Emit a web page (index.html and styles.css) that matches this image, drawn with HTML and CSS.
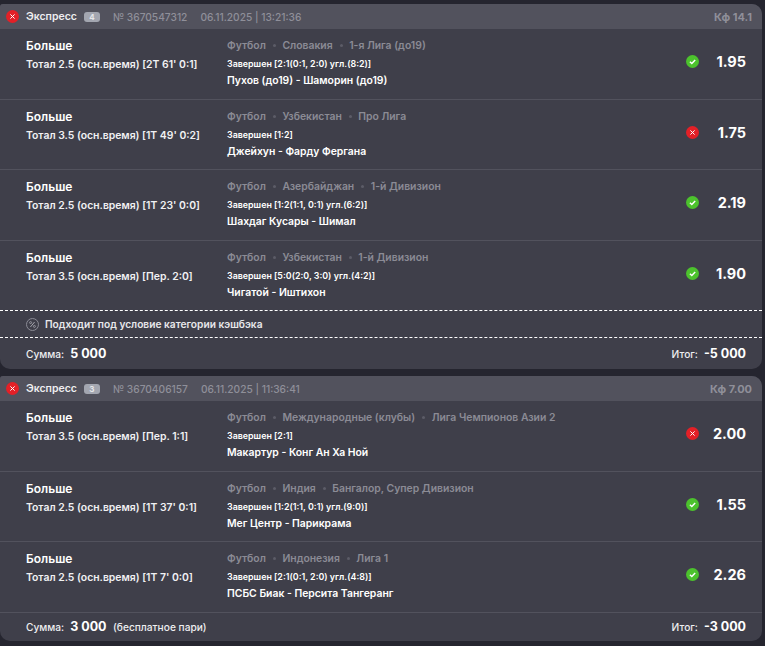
FILE: index.html
```html
<!DOCTYPE html>
<html lang="en">
<head>
  <meta charset="UTF-8" />
  <meta name="viewport" content="width=device-width, initial-scale=1.0"/>
  <title>Bets</title>
  <link rel="stylesheet" href="styles.css">
</head>
<body>
  <svg class="defs" width="0" height="0">
    <symbol id="ico-lost" viewBox="0 0 13 13">
      <circle cx="6.5" cy="6.5" r="6.5" fill="#e32027"/>
      <path d="M4.4 4.4l4.2 4.2M8.6 4.4l-4.2 4.2" stroke="#fff" stroke-width="1" fill="none"/>
    </symbol>
    <symbol id="ico-won" viewBox="0 0 13 13">
      <circle cx="6.5" cy="6.5" r="6.5" fill="#4cc22d"/>
      <path d="M3.9 6.8l1.9 1.7 3.4-3.6" stroke="#fff" stroke-width="1.4" fill="none"/>
    </symbol>
  </svg>

  <section class="card">
    <div class="card-head">
      <svg class="ico"><use href="#ico-lost"/></svg>
      <span class="type">Экспресс</span>
      <span class="count">4</span>
      <span class="num">№ 3670547312</span>
      <span class="date">06.11.2025 | 13:21:36</span>
      <span class="coef">Кф 14.1</span>
    </div>

    <div class="row">
      <div class="market"><b>Больше</b><p>Тотал 2.5 (осн.время) [2Т 61' 0:1]</p></div>
      <div class="info">
        <div class="path"><span>Футбол</span><i></i><span>Словакия</span><i></i><span>1-я Лига (до19)</span></div>
        <div class="state">Завершен [2:1(0:1, 2:0) угл.(8:2)]</div>
        <div class="teams">Пухов (до19) - Шаморин (до19)</div>
      </div>
      <svg class="ico"><use href="#ico-won"/></svg>
      <div class="odd">1.95</div>
    </div>

    <div class="row">
      <div class="market"><b>Больше</b><p>Тотал 3.5 (осн.время) [1Т 49' 0:2]</p></div>
      <div class="info">
        <div class="path"><span>Футбол</span><i></i><span>Узбекистан</span><i></i><span>Про Лига</span></div>
        <div class="state">Завершен [1:2]</div>
        <div class="teams">Джейхун - Фарду Фергана</div>
      </div>
      <svg class="ico"><use href="#ico-lost"/></svg>
      <div class="odd">1.75</div>
    </div>

    <div class="row">
      <div class="market"><b>Больше</b><p>Тотал 2.5 (осн.время) [1Т 23' 0:0]</p></div>
      <div class="info">
        <div class="path"><span>Футбол</span><i></i><span>Азербайджан</span><i></i><span>1-й Дивизион</span></div>
        <div class="state">Завершен [1:2(1:1, 0:1) угл.(6:2)]</div>
        <div class="teams">Шахдаг Кусары - Шимал</div>
      </div>
      <svg class="ico"><use href="#ico-won"/></svg>
      <div class="odd">2.19</div>
    </div>

    <div class="row last">
      <div class="market"><b>Больше</b><p>Тотал 3.5 (осн.время) [Пер. 2:0]</p></div>
      <div class="info">
        <div class="path"><span>Футбол</span><i></i><span>Узбекистан</span><i></i><span>1-й Дивизион</span></div>
        <div class="state">Завершен [5:0(2:0, 3:0) угл.(4:2)]</div>
        <div class="teams">Чигатой - Иштихон</div>
      </div>
      <svg class="ico"><use href="#ico-won"/></svg>
      <div class="odd">1.90</div>
    </div>

    <div class="cashback">
      <svg class="pct" viewBox="0 0 13 13">
        <circle cx="6.5" cy="6.5" r="6" fill="none" stroke="#8b8b95"/>
        <path d="M4.4 9l4.2-5" stroke="#a5a5ad" fill="none"/>
        <circle cx="4.6" cy="4.6" r="1" fill="none" stroke="#a5a5ad" stroke-width=".8"/>
        <circle cx="8.4" cy="8.4" r="1" fill="none" stroke="#a5a5ad" stroke-width=".8"/>
      </svg>
      <span>Подходит под условие категории кэшбэка</span>
    </div>

    <div class="card-foot">
      <span class="label">Сумма:</span><span class="amount">5 000</span>
      <span class="label result">Итог:</span><span class="amount">-5 000</span>
    </div>
  </section>

  <section class="card">
    <div class="card-head">
      <svg class="ico"><use href="#ico-lost"/></svg>
      <span class="type">Экспресс</span>
      <span class="count">3</span>
      <span class="num">№ 3670406157</span>
      <span class="date">06.11.2025 | 11:36:41</span>
      <span class="coef">Кф 7.00</span>
    </div>

    <div class="row">
      <div class="market"><b>Больше</b><p>Тотал 3.5 (осн.время) [Пер. 1:1]</p></div>
      <div class="info">
        <div class="path"><span>Футбол</span><i></i><span>Международные (клубы)</span><i></i><span>Лига Чемпионов Азии 2</span></div>
        <div class="state">Завершен [2:1]</div>
        <div class="teams">Макартур - Конг Ан Ха Ной</div>
      </div>
      <svg class="ico"><use href="#ico-lost"/></svg>
      <div class="odd">2.00</div>
    </div>

    <div class="row">
      <div class="market"><b>Больше</b><p>Тотал 2.5 (осн.время) [1Т 37' 0:1]</p></div>
      <div class="info">
        <div class="path"><span>Футбол</span><i></i><span>Индия</span><i></i><span>Бангалор, Супер Дивизион</span></div>
        <div class="state">Завершен [1:2(1:1, 0:1) угл.(9:0)]</div>
        <div class="teams">Мег Центр - Парикрама</div>
      </div>
      <svg class="ico"><use href="#ico-won"/></svg>
      <div class="odd">1.55</div>
    </div>

    <div class="row">
      <div class="market"><b>Больше</b><p>Тотал 2.5 (осн.время) [1Т 7' 0:0]</p></div>
      <div class="info">
        <div class="path"><span>Футбол</span><i></i><span>Индонезия</span><i></i><span>Лига 1</span></div>
        <div class="state">Завершен [2:1(0:1, 2:0) угл.(4:8)]</div>
        <div class="teams">ПСБС Биак - Персита Тангеранг</div>
      </div>
      <svg class="ico"><use href="#ico-won"/></svg>
      <div class="odd">2.26</div>
    </div>

    <div class="card-foot short">
      <span class="label">Сумма:</span><span class="amount">3 000</span>
      <span class="label free">(бесплатное пари)</span>
      <span class="label result">Итог:</span><span class="amount">-3 000</span>
    </div>
  </section>
</body>
</html>
```

FILE: styles.css
```css
* { box-sizing: border-box; }

html, body {
  height: 100%;
  overflow: hidden;
}

body {
  margin: 0;
  padding-top: 4px;
  padding-right: 3px;
  font-family: Inter, "Liberation Sans", sans-serif;
  background-color: #25252f;
  color: #fff;
}

.defs {
  position: absolute;
}

.card {
  background: #3f3f4a;
  border-radius: 3px 10px 10px 10px;
  margin-bottom: 7px;
  overflow: hidden;
}

.card-head {
  display: flex;
  align-items: center;
  height: 25px;
  padding: 0 10px 0 6px;
  background-color: #52525d;
  font-size: 10.2px;
  font-weight: 500;
  color: #8f8f99;
}

.ico {
  width: 13px;
  height: 13px;
  flex-shrink: 0;
}

.type {
  margin-left: 7px;
  font-size: 10.5px;
  color: #eeeef0;
  font-weight: 600;
}

.count {
  margin-left: 7px;
  width: 16px;
  height: 10px;
  line-height: 10px;
  border-radius: 3px;
  text-align: center;
  font-size: 8px;
  font-weight: 700;
  background-color: #a3a6b0;
  color: #e6e7ea;
}

.num {
  margin-left: 13px;
}

.date {
  margin-left: 13px;
}

.coef {
  margin-left: auto;
  font-size: 11px;
  font-weight: 700;
}

.row {
  display: flex;
  align-items: center;
  height: 70.5px;
  padding: 0 16px 4px 26px;
  border-bottom: 1px solid #52525d;
}

.row.last {
  height: 69.5px;
  border-bottom: none;
}

.market {
  width: 201px;
  align-self: flex-start;
  padding-top: 8px;
}

.market b {
  display: block;
  font-size: 12px;
  font-weight: 600;
  line-height: 17px;
}

.market p {
  margin: 3px 0 0;
  font-size: 10.4px;
  font-weight: 600;
  line-height: 16px;
  color: #f1f1f3;
}

.info {
  flex: 1;
  align-self: flex-start;
  padding-top: 8px;
}

.path {
  display: flex;
  align-items: center;
  height: 17px;
  font-size: 10.4px;
  font-weight: 600;
  color: #8b8b95;
}

.path i {
  width: 3px;
  height: 3px;
  margin: 0 6.5px 0 7px;
  border-radius: 50%;
  background-color: #5c5c67;
}

.state {
  margin-top: 2px;
  font-size: 8.9px;
  font-weight: 600;
  line-height: 16px;
}

.teams {
  margin-top: 0;
  font-size: 10.4px;
  font-weight: 600;
  line-height: 17px;
}

.odd {
  width: 47px;
  text-align: right;
  font-size: 14.5px;
  font-weight: 700;
}

.cashback {
  display: flex;
  align-items: center;
  height: 28px;
  padding-left: 26px;
  border-top: 1px dashed #fff;
  border-bottom: 1px dashed #fff;
  font-size: 10.2px;
  font-weight: 600;
  color: #e8e8ea;
}

.pct {
  width: 13px;
  height: 13px;
  margin-right: 6px;
}

.card-foot {
  display: flex;
  align-items: center;
  height: 31px;
  padding: 0 16px 0 26px;
}

.card-foot.short {
  height: 28px;
}

.label {
  font-size: 10.2px;
  font-weight: 500;
  color: #eeeef0;
}

.amount {
  margin-left: 6px;
  font-size: 12.5px;
  font-weight: 700;
}

.free {
  margin-left: 6.5px;
}

.result {
  margin-left: auto;
}
```
